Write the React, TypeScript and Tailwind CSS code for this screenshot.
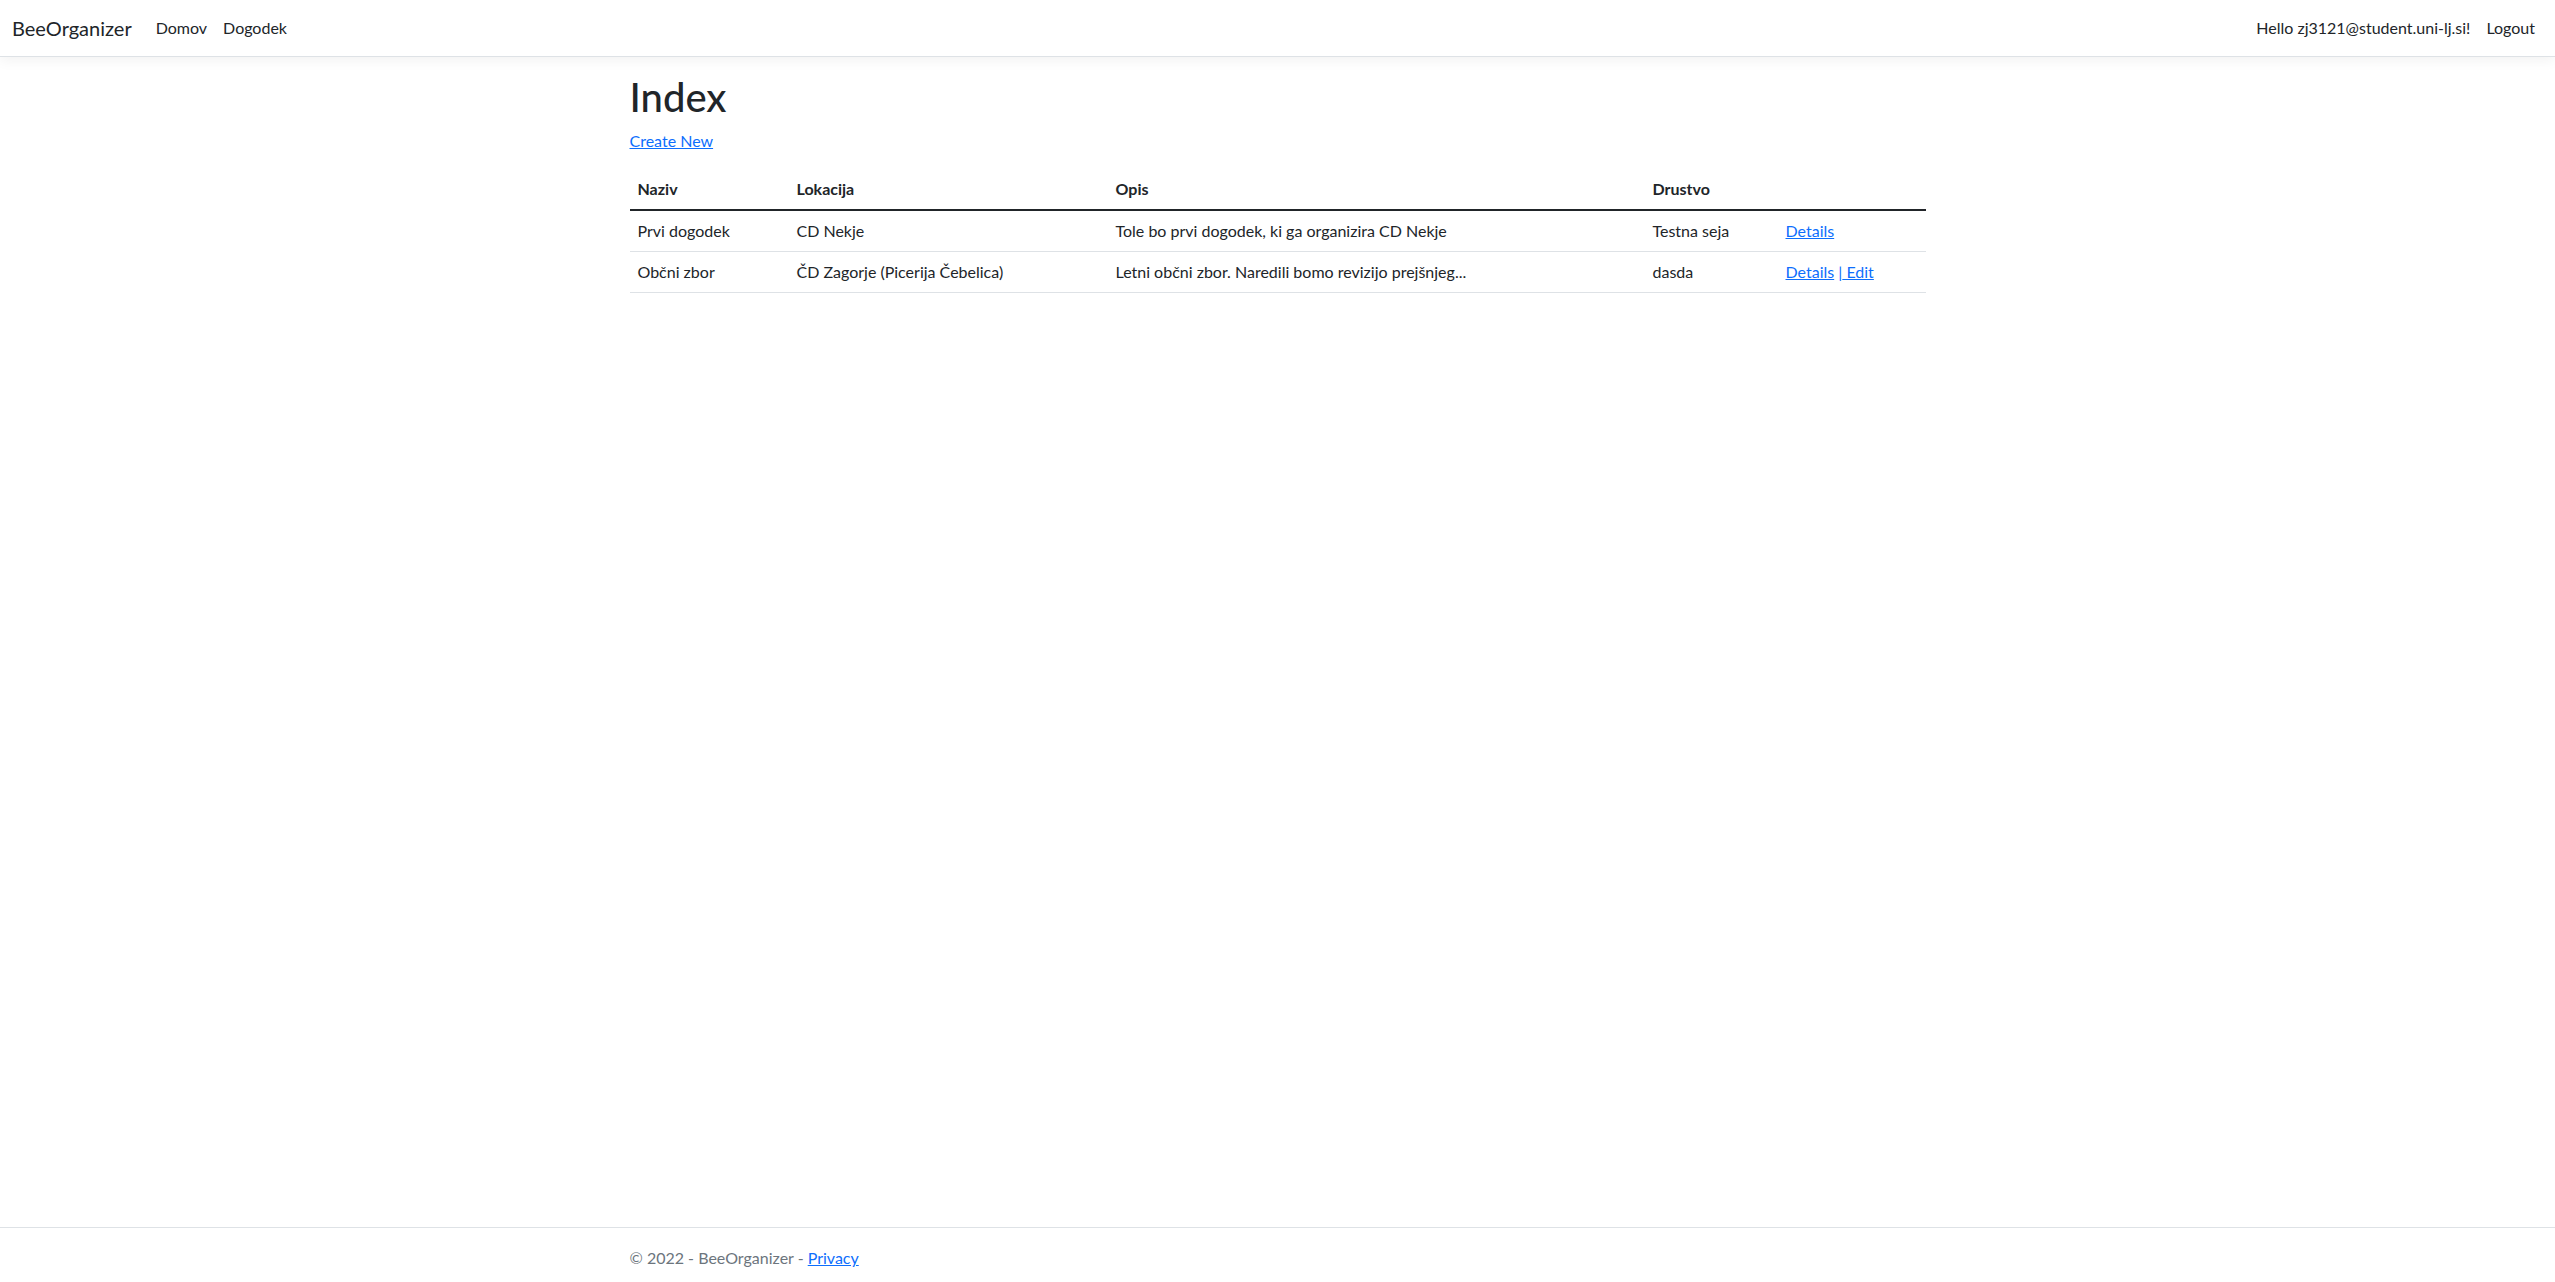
import React from 'react';

interface Dogodek {
  naziv: string;
  lokacija: string;
  opis: string;
  drustvo: string;
  canEdit: boolean;
}

const dogodki: Dogodek[] = [
  {
    naziv: 'Prvi dogodek',
    lokacija: 'CD Nekje',
    opis: 'Tole bo prvi dogodek, ki ga organizira CD Nekje',
    drustvo: 'Testna seja',
    canEdit: false,
  },
  {
    naziv: 'Občni zbor',
    lokacija: 'ČD Zagorje (Picerija Čebelica)',
    opis: 'Letni občni zbor. Naredili bomo revizijo prejšnjeg...',
    drustvo: 'dasda',
    canEdit: true,
  },
];

const font = "font-['Segoe_UI','Lato','Liberation_Sans',sans-serif]";

export default function App() {
  return (
    <div className={`${font} flex min-h-screen flex-col bg-white text-[16px] leading-6 text-[#212529]`}>
      <header className="mb-4 border-b border-[#dee2e6] bg-white shadow-[0_0.25rem_0.75rem_rgba(0,0,0,0.05)]">
        <nav className="flex h-14 items-center px-3">
          <a href="#" className="mr-4 py-[5px] text-[20px] leading-[30px] text-[#212529]">
            BeeOrganizer
          </a>
          <ul className="flex flex-1 items-center">
            <li><a href="#" className="px-2 py-2 text-[#212529]">Domov</a></li>
            <li><a href="#" className="px-2 py-2 text-[#212529]">Dogodek</a></li>
          </ul>
          <ul className="flex items-center">
            <li><a href="#" className="px-2 py-2 text-[#212529]">Hello zj3121@student.uni-lj.si!</a></li>
            <li><a href="#" className="px-2 py-2 text-[#212529]">Logout</a></li>
          </ul>
        </nav>
      </header>

      <main className="mx-auto w-full max-w-[1320px] flex-1 px-3 pb-4">
        <h1 className="mb-2 text-[40px] font-medium leading-[48px]">Index</h1>
        <p className="mb-4">
          <a href="#" className="text-[#0d6efd] underline">Create New</a>
        </p>
        <table className="w-full table-fixed border-collapse">
          <colgroup>
            <col className="w-[159px]" />
            <col className="w-[319px]" />
            <col className="w-[537px]" />
            <col className="w-[133px]" />
            <col className="w-[148px]" />
          </colgroup>
          <thead>
            <tr className="border-b-2 border-[#212529]">
              <th className="px-2 py-2 text-left font-bold">Naziv</th>
              <th className="px-2 py-2 text-left font-bold">Lokacija</th>
              <th className="px-2 py-2 text-left font-bold">Opis</th>
              <th className="px-2 py-2 text-left font-bold">Drustvo</th>
              <th className="px-2 py-2"></th>
            </tr>
          </thead>
          <tbody>
            {dogodki.map((d) => (
              <tr key={d.naziv} className="border-b border-[#dee2e6]">
                <td className="px-2 py-2">{d.naziv}</td>
                <td className="px-2 py-2">{d.lokacija}</td>
                <td className="px-2 py-2">{d.opis}</td>
                <td className="px-2 py-2">{d.drustvo}</td>
                <td className="px-2 py-2 whitespace-nowrap">
                  <a href="#" className="text-[#0d6efd] underline">Details</a>
                  {d.canEdit && (
                    <>
                      {' '}
                      <span className="text-[#0d6efd]">|</span>
                      <a href="#" className="text-[#0d6efd] underline"> Edit</a>
                    </>
                  )}
                </td>
              </tr>
            ))}
          </tbody>
        </table>
      </main>

      <footer className="h-[55px] overflow-hidden whitespace-nowrap border-t border-[#dee2e6] leading-[60px] text-[#6c757d]">
        <div className="mx-auto max-w-[1320px] px-3">
          &copy; 2022 - BeeOrganizer - <a href="#" className="text-[#0d6efd] underline">Privacy</a>
        </div>
      </footer>
    </div>
  );
}
